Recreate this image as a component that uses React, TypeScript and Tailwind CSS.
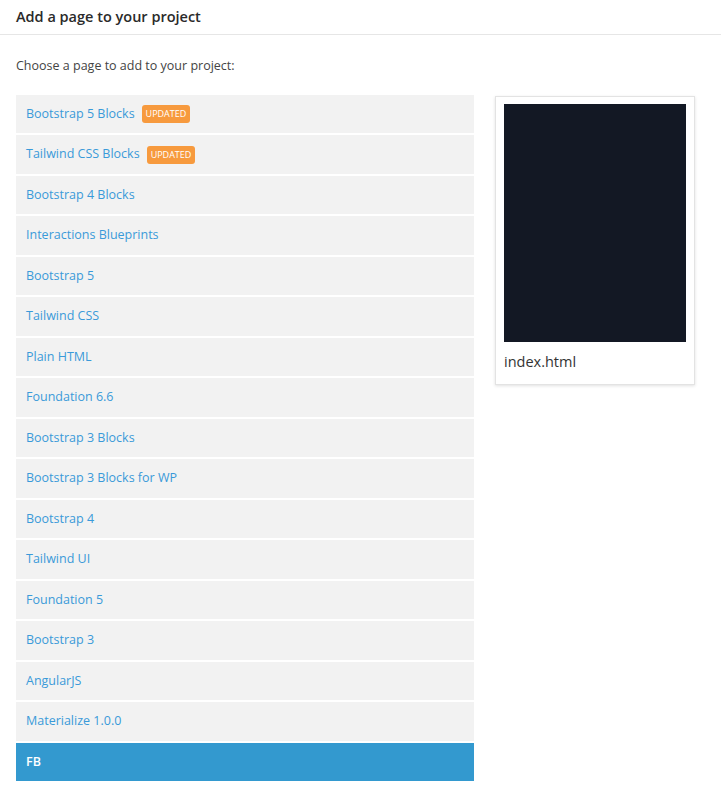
import React from 'react';

const items: { name: string; updated?: boolean }[] = [
  { name: 'Bootstrap 5 Blocks', updated: true },
  { name: 'Tailwind CSS Blocks', updated: true },
  { name: 'Bootstrap 4 Blocks' },
  { name: 'Interactions Blueprints' },
  { name: 'Bootstrap 5' },
  { name: 'Tailwind CSS' },
  { name: 'Plain HTML' },
  { name: 'Foundation 6.6' },
  { name: 'Bootstrap 3 Blocks' },
  { name: 'Bootstrap 3 Blocks for WP' },
  { name: 'Bootstrap 4' },
  { name: 'Tailwind UI' },
  { name: 'Foundation 5' },
  { name: 'Bootstrap 3' },
  { name: 'AngularJS' },
  { name: 'Materialize 1.0.0' },
  { name: 'FB' },
];

const App: React.FC = () => {
  const selected = 'FB';
  return (
    <div className="min-h-screen bg-white" style={{ fontFamily: '"Open Sans", "Noto Sans", sans-serif' }}>
      {/* Header */}
      <div className="h-[35px] border-b border-[#e6e6e6] px-4 flex items-center">
        <h1 className="text-[14.5px] font-semibold text-[#2a2a2a]">Add a page to your project</h1>
      </div>

      <div className="px-4 pt-[22px]">
        <p className="text-[12.5px] text-[#444] mb-[19px]">Choose a page to add to your project:</p>

        <div className="flex items-start gap-[21px]">
          {/* Page list */}
          <div className="w-[458px] flex flex-col gap-[2px]">
            {items.map((item) => {
              const active = item.name === selected;
              return (
                <div
                  key={item.name}
                  className={
                    active
                      ? 'h-[38.5px] flex items-center px-[10px] bg-[#3399cf] text-white text-[12.5px] font-semibold'
                      : 'h-[38.5px] flex items-center px-[10px] bg-[#f2f2f2] text-[#3a9ad9] text-[12.5px]'
                  }
                >
                  {item.name}
                  {item.updated && (
                    <span className="ml-[7px] bg-[#f79a3e] text-white text-[9px] uppercase rounded-[3px] px-[4px] h-[18px] flex items-center">
                      Updated
                    </span>
                  )}
                </div>
              );
            })}
          </div>

          {/* Preview card */}
          <div className="w-[200px] mt-[1px] bg-white border border-[#e3e3e3] shadow-[0_1px_3px_rgba(0,0,0,0.12)] px-[8px] pt-[7px] pb-[11px]">
            <div className="h-[238px] bg-[#131824]" />
            <div className="pt-[9px] text-[14.5px] text-[#333]">index.html</div>
          </div>
        </div>
      </div>
    </div>
  );
};

export default App;
